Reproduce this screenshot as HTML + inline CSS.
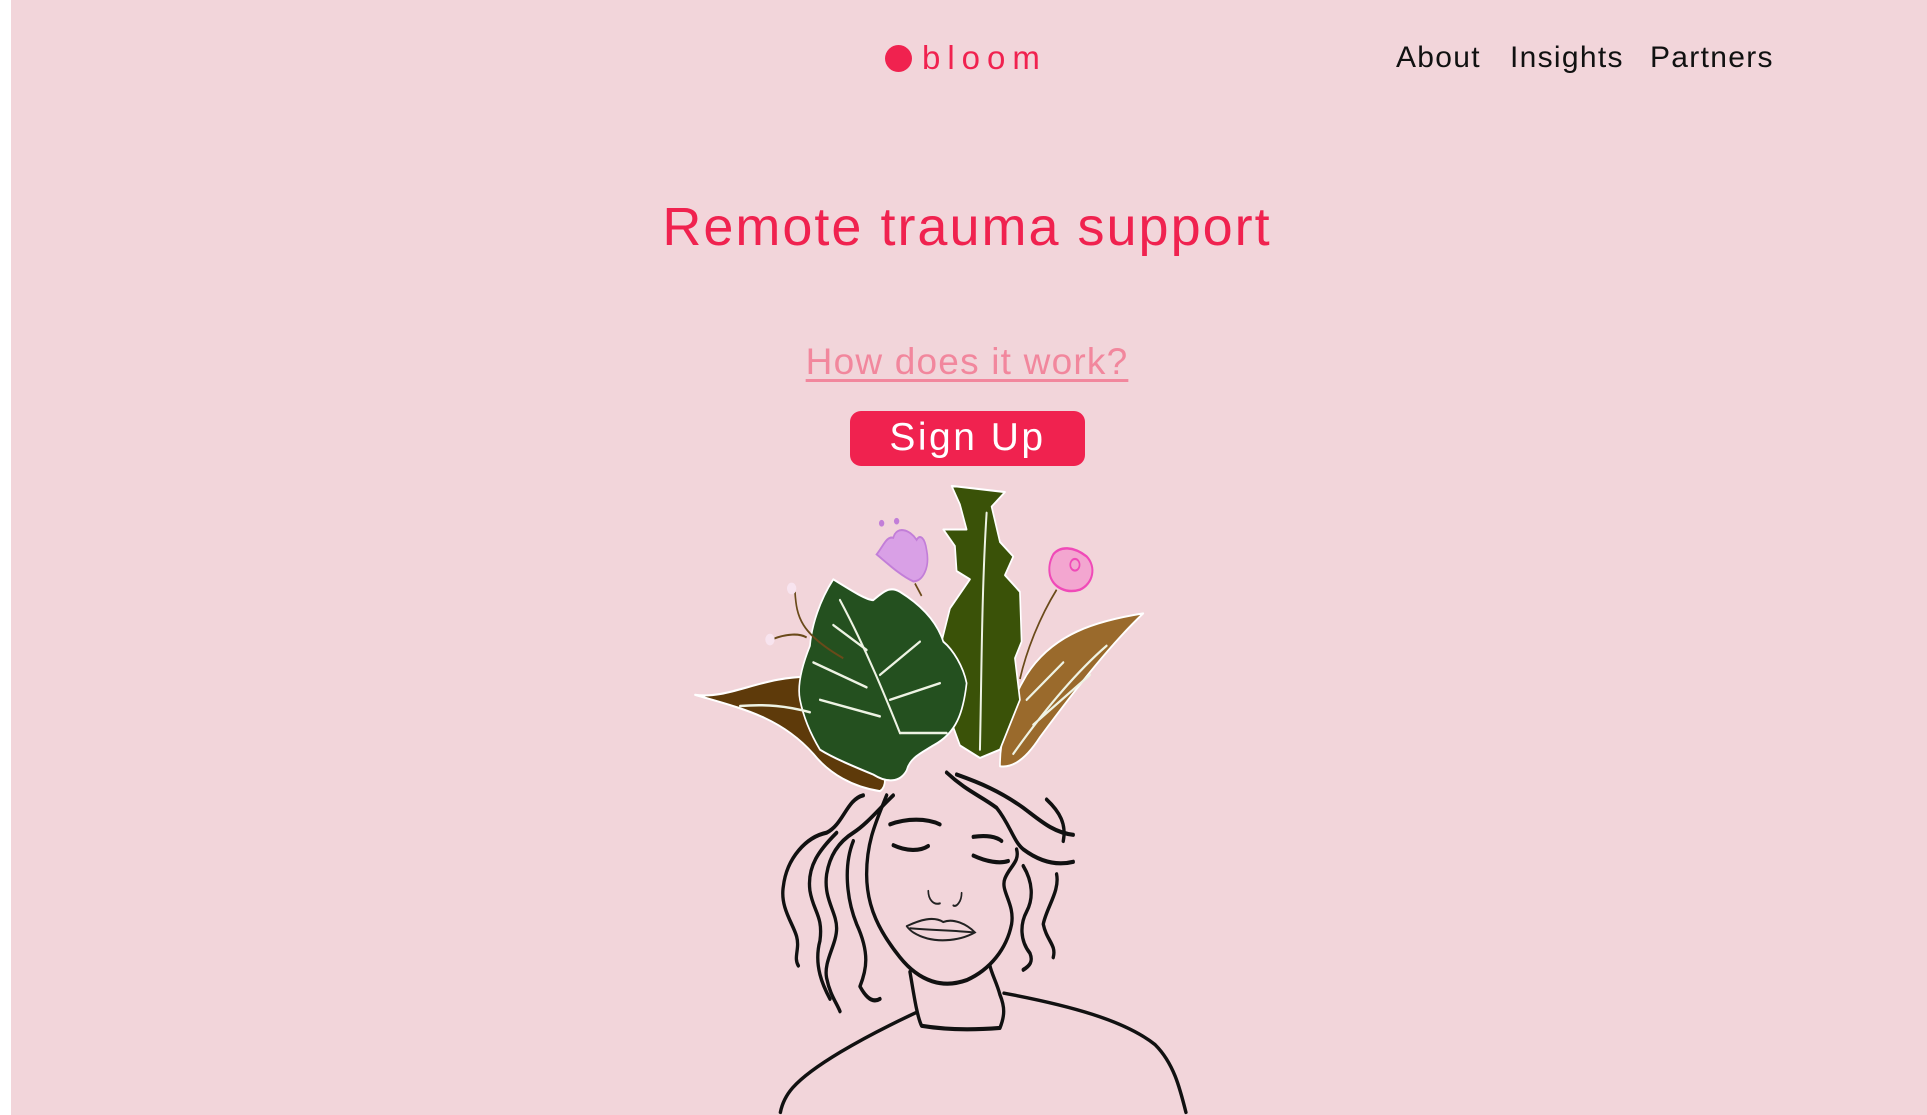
<!DOCTYPE html>
<html><head><meta charset="utf-8"><style>
html,body{margin:0;padding:0}
body{width:1927px;height:1115px;background:#fff;position:relative;overflow:hidden;font-family:"Liberation Sans",sans-serif}
#bg{position:absolute;left:11px;top:0;right:0;bottom:0;background:#f2d5da}
.dot{position:absolute;left:885px;top:45px;width:27px;height:27px;border-radius:50%;background:#f0224f}
.logo{position:absolute;left:922px;top:39px;font-size:33px;letter-spacing:7px;color:#f0224f}
.nav{position:absolute;top:41px;font-size:30px;letter-spacing:1.3px;color:#111}
h1{position:absolute;left:0;width:1934px;text-align:center;top:196px;margin:0;font-weight:normal;font-size:54px;color:#f0224f;letter-spacing:2px}
.link{position:absolute;left:0;width:1934px;text-align:center;top:341px;font-size:37px;color:#f2879d;}
.link span{text-decoration:underline;text-decoration-thickness:3px;text-underline-offset:5px;letter-spacing:1.2px}
.btn{position:absolute;left:850px;top:411px;width:235px;height:55px;border-radius:11px;background:#f0224f;color:#fff;font-size:39px;letter-spacing:2.5px;text-align:center;line-height:54px}
svg{position:absolute;left:0;top:0}
</style></head><body>
<div id="bg"></div>
<div class="dot"></div><div class="logo">bloom</div>
<div class="nav" style="left:1396px">About</div>
<div class="nav" style="left:1510px">Insights</div>
<div class="nav" style="left:1650px">Partners</div>
<h1>Remote trauma support</h1>
<div class="link"><span>How does it work?</span></div>
<div class="btn">Sign Up</div>
<svg width="1927" height="1115" viewBox="0 0 1568 907">
<g transform="matrix(0.2712 0 0 0.338 553.3 380)">
<g stroke="#fff" stroke-width="5" stroke-linejoin="round">
<path d="M45 548 C150 560 250 500 400 505 C480 520 560 620 600 700 C620 740 620 770 600 780 C520 770 450 740 400 690 C300 600 180 580 45 548Z" fill="#5e3a0a"/>
<path d="M1390 352 C1250 370 1120 400 1040 500 C980 580 960 660 960 720 C1000 725 1040 700 1080 650 C1200 520 1300 420 1390 352Z" fill="#9a6a2c"/>
<path d="M815 45 L975 60 L935 95 L960 180 L1000 215 L975 260 L1020 300 L1025 420 L1005 460 L1020 560 L960 680 L900 700 L840 670 L790 560 L785 420 L810 340 L870 270 L830 250 L825 190 L790 150 L860 150 L840 90Z" fill="#3a5208"/>
<path d="M460 270 C520 300 560 320 580 320 C610 300 630 285 660 300 C720 330 770 370 790 420 C820 440 850 480 860 520 C850 590 830 640 760 670 C720 690 690 700 680 730 C660 760 620 760 580 740 C520 720 460 700 420 680 C390 640 370 600 360 560 C350 520 370 470 390 430 C395 380 420 320 460 270Z" fill="#24501f"/>
</g>
<g fill="none" stroke="#eef3e4" stroke-width="6" stroke-linecap="round">
<path d="M480 320 C560 440 620 560 660 640"/>
<path d="M600 500 L720 420 M560 440 L460 380 M630 560 L780 520 M600 600 L420 560 M660 640 L800 640 M560 530 L400 470"/>
<path d="M920 110 C905 300 905 500 900 680"/>
<path d="M1280 430 C1180 500 1080 600 1000 690 M1040 560 L1150 470 M1060 620 L1230 500"/>
<path d="M180 575 C260 570 320 575 390 590"/>
</g>
<g fill="none" stroke="#6a4a1a" stroke-width="5"><path d="M345 300 C350 360 360 400 490 460 M275 415 C320 400 360 400 380 410"/><path d="M1130 295 C1080 360 1040 440 1020 510"/><path d="M705 280 L725 310"/></g>
<path d="M590 210 C620 230 660 260 700 275 C730 275 750 240 740 200 C735 170 720 160 710 175 C690 150 650 140 640 170 C620 165 610 190 590 210Z" fill="#d9a0e6" stroke="#c27ed8" stroke-width="5"/>
<circle cx="605" cy="135" r="8" fill="#c27ed8"/><circle cx="650" cy="130" r="8" fill="#c27ed8"/>
<path d="M1120 210 C1140 190 1180 190 1220 215 C1250 240 1240 280 1200 295 C1160 305 1120 290 1110 260 C1105 240 1110 225 1120 210Z" fill="#f3a6d0" stroke="#f04ab8" stroke-width="6"/>
<circle cx="1185" cy="235" r="14" fill="none" stroke="#f04ab8" stroke-width="5"/>
<g fill="#f8e4ef"><circle cx="335" cy="292" r="14"/><circle cx="270" cy="415" r="14"/></g>
<g fill="none" stroke="#111" stroke-width="10" stroke-linecap="round" stroke-linejoin="round">
<path d="M620 790 C590 850 560 900 560 980 C560 1060 600 1120 660 1180 C720 1240 790 1255 860 1235 C930 1210 980 1160 995 1100 C1005 1050 960 1020 975 990 C990 960 1020 950 1010 920"/>
<path d="M800 735 C860 780 900 790 950 820 C990 860 1000 900 1030 920 C1080 950 1130 960 1180 950"/>
<path d="M830 740 C900 760 960 780 1030 820 C1080 850 1120 880 1180 885"/>
<path d="M1100 800 C1140 830 1160 860 1150 900"/>
<path d="M640 790 C600 820 560 860 520 880 C480 900 450 930 440 980 C430 1040 470 1070 470 1110 C470 1150 430 1190 440 1230 C450 1270 470 1290 480 1310"/>
<path d="M550 790 C500 800 490 860 440 880 C380 890 320 940 310 1010 C300 1060 340 1100 350 1130 C360 1160 340 1180 355 1200"/>
<path d="M470 880 C420 920 380 960 390 1020 C400 1070 430 1080 420 1140 C400 1200 430 1250 450 1280"/>
<path d="M520 900 C490 960 500 1040 530 1100 C570 1170 560 1210 540 1250 C560 1280 580 1290 600 1280"/>
<path d="M1030 960 C1060 1000 1060 1040 1040 1070 C1020 1100 1020 1140 1050 1170 C1060 1190 1050 1200 1030 1210"/>
<path d="M1130 980 C1140 1020 1100 1060 1090 1100 C1100 1140 1130 1150 1120 1180"/>
<path d="M690 1215 C700 1260 710 1320 725 1345 C800 1355 880 1355 960 1350 C975 1320 975 1300 960 1270 C950 1240 935 1220 930 1200"/>
<path d="M630 860 C680 845 740 845 780 860 M880 890 C920 885 950 890 965 900"/>
<path d="M640 910 C680 925 720 925 745 912 M880 935 C920 950 960 955 985 948"/>
</g>
<g fill="none" stroke="#222" stroke-width="5" stroke-linecap="round">
<path d="M745 1020 C745 1040 760 1055 780 1050 M845 1025 C845 1045 830 1060 820 1055"/>
<path d="M680 1105 C720 1090 760 1080 790 1095 C820 1085 860 1100 885 1120 C840 1140 760 1150 700 1120 C690 1115 685 1110 680 1105"/>
<path d="M690 1110 C760 1115 820 1115 880 1120"/>
</g>
</g>
<g fill="none" stroke="#111" stroke-width="2.8" stroke-linecap="round">
<path d="M745 824 C700 845 660 868 645 885 C638 893 636 900 635 905"/>
<path d="M817 808 C870 818 915 830 940 850 C955 865 960 885 965 905"/>
</g>
</svg>
</body></html>
